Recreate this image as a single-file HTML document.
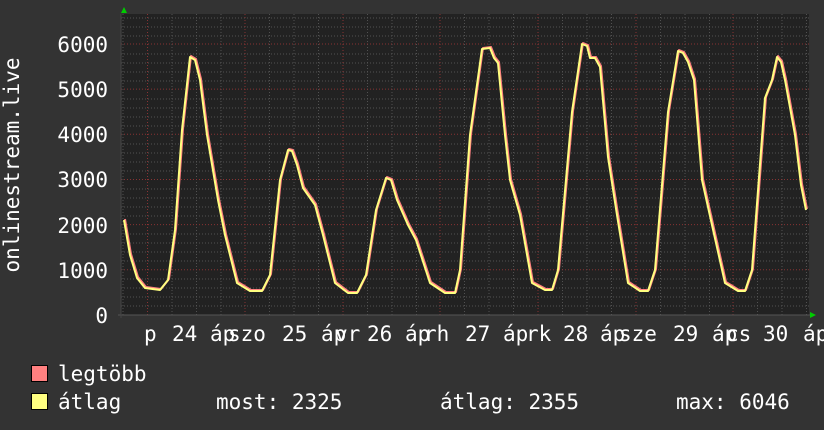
<!DOCTYPE html>
<html><head><meta charset="utf-8"><style>
html,body{margin:0;padding:0;background:#333;}
svg{display:block;}
text{font-family:"DejaVu Sans Mono","Liberation Mono",monospace;font-size:21px;fill:#fff;}
</style></head><body>
<svg width="824" height="430" viewBox="0 0 824 430" xmlns="http://www.w3.org/2000/svg">
<rect width="824" height="430" fill="#333"/>
<rect x="121" y="14" width="688" height="301" fill="#222"/>
<g stroke="#666" stroke-width="1" stroke-dasharray="1,2" opacity="0.7">
<path d="M121 306H809M121 297H809M121 288H809M121 279H809M121 261H809M121 252H809M121 243H809M121 234H809M121 216H809M121 207H809M121 198H809M121 189H809M121 171H809M121 162H809M121 153H809M121 144H809M121 126H809M121 117H809M121 108H809M121 99H809M121 81H809M121 72H809M121 63H809M121 54H809M121 36H809M121 27H809M121 18H809"/>
<path d="M172 14V315M196.5 14V315M221 14V315M269.5 14V315M294 14V315M318.5 14V315M367.5 14V315M392 14V315M416.5 14V315M464.5 14V315M489 14V315M513.5 14V315M562.5 14V315M587 14V315M611.5 14V315M660.5 14V315M685 14V315M709.5 14V315M757.5 14V315M782 14V315M806.5 14V315M123 14V315"/>
</g>
<g stroke="#833" stroke-width="1" stroke-dasharray="1,2">
<path d="M121 269.8H809M121 224.6H809M121 179.5H809M121 134.3H809M121 89.1H809M121 44H809"/>
<path d="M147.5 14V315M245 14V315M343 14V315M440 14V315M538 14V315M636 14V315M733 14V315"/>
</g>
<path d="M118 315H812" stroke="#555" stroke-width="1"/>
<path d="M121 14V318" stroke="#444" stroke-width="1"/>
<polygon points="121,13 124,7 127,13" fill="#0c0"/>
<polygon points="810,312 816,315 810,318" fill="#0c0"/>
<g fill="none" stroke-width="2" stroke-linejoin="round">
<polyline stroke="#ff8080" transform="translate(1,-1)" points="124,220 130,255 137,278 145,288 160,290 168,280 175,230 182,130 190,57 195,60 200,80 207,135 218,200 225,235 237,283 250,291 262,291 270,275 280,180 288,150 292,151 297,165 303,188 315,205 323,235 335,283 348,293 357,293 366,275 376,210 386,178 391,180 397,200 408,225 416,240 430,283 445,293 455,293 460,270 470,135 482,49 490,48 494,58 498,63 505,135 510,180 520,215 532,283 545,290 552,290 558,270 572,112 582,44 587,46 590,58 595,58 600,67 608,157 617,215 628,283 640,291 648,291 655,270 668,112 678,51 683,53 688,62 694,80 702,180 712,225 725,283 738,291 745,291 752,270 765,98 772,80 777,57 781,62 785,80 795,135 801,185 806,210"/>
<polyline stroke="#ffff80" points="124,220 130,255 137,278 145,288 160,290 168,280 175,230 182,130 190,57 195,60 200,80 207,135 218,200 225,235 237,283 250,291 262,291 270,275 280,180 288,150 292,151 297,165 303,188 315,205 323,235 335,283 348,293 357,293 366,275 376,210 386,178 391,180 397,200 408,225 416,240 430,283 445,293 455,293 460,270 470,135 482,49 490,48 494,58 498,63 505,135 510,180 520,215 532,283 545,290 552,290 558,270 572,112 582,44 587,46 590,58 595,58 600,67 608,157 617,215 628,283 640,291 648,291 655,270 668,112 678,51 683,53 688,62 694,80 702,180 712,225 725,283 738,291 745,291 752,270 765,98 772,80 777,57 781,62 785,80 795,135 801,185 806,210"/>
</g>
<g text-anchor="end">
<text x="108" y="52">6000</text>
<text x="108" y="97">5000</text>
<text x="108" y="142">4000</text>
<text x="108" y="187">3000</text>
<text x="108" y="233">2000</text>
<text x="108" y="278">1000</text>
<text x="108" y="323">0</text>
</g>
<text transform="translate(19,165) rotate(-90)" text-anchor="middle">onlinestream.live</text>
<g>
<text x="144" y="341">p</text>
<text x="172" y="341">24</text>
<text x="210" y="341">áp</text>
<text x="228" y="341">szo</text>
<text x="282" y="341">25</text>
<text x="321" y="341">áp</text>
<text x="335" y="341">vr</text>
<text x="367" y="341">26</text>
<text x="405" y="341">áp</text>
<text x="424" y="341">rh</text>
<text x="465" y="341">27</text>
<text x="503" y="341">áp</text>
<text x="526" y="341">rk</text>
<text x="563" y="341">28</text>
<text x="600" y="341">áp</text>
<text x="619" y="341">sze</text>
<text x="673" y="341">29</text>
<text x="712" y="341">áp</text>
<text x="726" y="341">cs</text>
<text x="763" y="341">30</text>
<text x="803" y="341">áp</text>
</g>
<rect x="31.5" y="365.5" width="16" height="16" fill="#ff8080" stroke="#000"/>
<rect x="31.5" y="393.5" width="16" height="16" fill="#ffff80" stroke="#000"/>
<text x="58" y="381">legtöbb</text>
<text x="58" y="409">átlag</text>
<text x="216" y="409">most: 2325</text>
<text x="440" y="409">átlag: 2355</text>
<text x="676" y="409">max: 6046</text>
</svg>
</body></html>
